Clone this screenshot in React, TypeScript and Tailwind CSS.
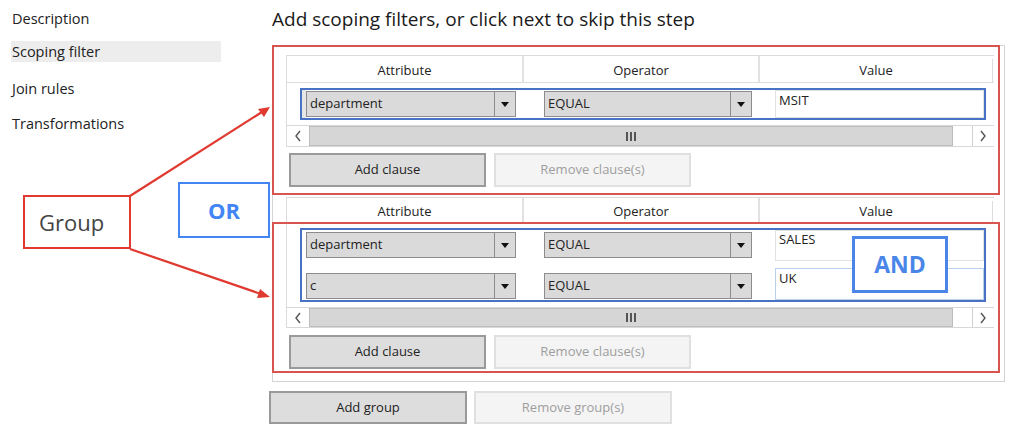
import React from "react";

const Arrow = () => (
  <svg width="8" height="5" viewBox="0 0 8 5">
    <path d="M0 0 L8 0 L4 5 Z" fill="#111" />
  </svg>
);

const Drop = ({ label, wide }: { label: string; wide: boolean }) => (
  <div
    className={`flex h-[26px] border border-[#8c8c8c] bg-[#dadada] ${wide ? "w-[210px]" : "w-[208px]"}`}
  >
    <div className="flex-1 flex items-center pl-[3px] text-[13px] text-[#222]">{label}</div>
    <div className="w-[21px] border-l border-[#8c8c8c] flex items-center justify-center">
      <Arrow />
    </div>
  </div>
);

const Chevron = ({ dir }: { dir: "l" | "r" }) => (
  <svg width="8" height="12" viewBox="0 0 8 12">
    <path
      d={dir === "l" ? "M6 1 L2 6 L6 11" : "M2 1 L6 6 L2 11"}
      fill="none"
      stroke="#555"
      strokeWidth="1.4"
    />
  </svg>
);

const ScrollBar = ({ h }: { h: string }) => (
  <div className={`flex ${h} border-t border-b border-[#d8d8d8] bg-white`}>
    <div className="w-[22px] flex items-center justify-center bg-white">
      <Chevron dir="l" />
    </div>
    <div className="w-[644px] bg-[#d6d6d6] border border-[#bdbdbd] flex items-center justify-center gap-[2px]">
      <div className="w-[2px] h-[9px] bg-[#555]" />
      <div className="w-[2px] h-[9px] bg-[#555]" />
      <div className="w-[2px] h-[9px] bg-[#555]" />
    </div>
    <div className="w-[19px] bg-white" />
    <div className="w-[21px] border-l border-[#d0d0d0] flex items-center justify-center bg-white">
      <Chevron dir="r" />
    </div>
  </div>
);

const Header = ({ h }: { h: string }) => (
  <div className={`flex ${h} border-t border-b border-[#dcdcdc] text-[13px] text-[#222] pt-[3px]`}>
    <div className="w-[235px] flex items-center justify-center">Attribute</div>
    <div className="w-[2px] bg-[#e2e2e2] -mt-[3px]" />
    <div className="w-[234px] flex items-center justify-center">Operator</div>
    <div className="w-[2px] bg-[#e2e2e2] -mt-[3px]" />
    <div className="w-[233px] flex items-center justify-center border-r border-[#dcdcdc]">Value</div>
  </div>
);

const Buttons = ({ add, remove, mt }: { add: string; remove: string; mt: string }) => (
  <div className={`flex gap-[8px] ml-[3px] ${mt} text-[13px]`}>
    <div className="w-[197px] h-[34px] border-2 border-[#9a9a9a] bg-[#dddddd] flex items-center justify-center text-[#222]">
      {add}
    </div>
    <div className="w-[197px] h-[34px] border-2 border-[#e0e0e0] bg-[#f4f4f4] flex items-center justify-center text-[#9e9e9e]">
      {remove}
    </div>
  </div>
);

export default function App() {
  return (
    <div className="relative w-[1024px] h-[431px] bg-white overflow-hidden flex font-['Open_Sans',sans-serif] text-[#222]">
      {/* Left nav */}
      <div className="w-[269px] shrink-0 pl-[11px] pt-[8px] text-[14.5px]">
        <div className="w-[210px] h-[21px] flex items-center pl-[1px]">Description</div>
        <div className="w-[210px] h-[21px] flex items-center pl-[1px] mt-[12px] bg-[#ededed]">Scoping filter</div>
        <div className="w-[210px] h-[21px] flex items-center pl-[1px] mt-[16px]">Join rules</div>
        <div className="w-[210px] h-[21px] flex items-center pl-[1px] mt-[14px]">Transformations</div>
      </div>

      {/* Main */}
      <div className="flex flex-col">
        <div className="ml-[3px] mt-[7px] h-[24px] flex items-center text-[19px] text-[#1a1a1a]">
          Add scoping filters, or click next to skip this step
        </div>

        <div className="ml-[3px] mt-[14px] w-[733px] h-[337px] border border-[#d4d4d4] flex flex-col">
          {/* Group 1 */}
          <div className="-ml-px -mt-px w-[728px] h-[150px] border-2 border-[#d9534f] pl-[12px] pt-[8px]">
            <div className="w-[708px] border-l border-[#dcdcdc]">
              <Header h="h-[28px]" />
              <div className="h-[42px] pt-[5px] pl-[13px]">
                <div className="w-[686px] h-[32px] border-2 border-[#4a72c4] flex">
                  <div className="w-[4px] h-[28px] bg-[#e6e6e6]" />
                  <div className="pt-[1px]">
                    <Drop label="department" wide={true} />
                  </div>
                  <div className="w-[28px]" />
                  <div className="pt-[1px]">
                    <Drop label="EQUAL" wide={false} />
                  </div>
                  <div className="w-[23px]" />
                  <div className="w-[209px] h-[28px] border border-[#e2e2e2] pl-[3px] text-[13px] leading-[16px] pt-[1px]">
                    MSIT
                  </div>
                </div>
              </div>
              <ScrollBar h="h-[22px]" />
            </div>
            <Buttons add="Add clause" remove="Remove clause(s)" mt="mt-[6px]" />
          </div>

          {/* Group 2 header */}
          <div className="ml-[13px] mt-[2px] w-[708px] border-l border-[#dcdcdc]">
            <Header h="h-[26px]" />
          </div>

          {/* Group 2 */}
          <div className="-ml-px -mt-px w-[728px] h-[151px] border-2 border-[#d9534f] pl-[12px]">
            <div className="w-[708px] border-l border-[#dcdcdc]">
              <div className="h-[83px] pt-[4px] pl-[13px]">
                <div className="w-[686px] h-[74px] border-2 border-[#4a72c4] flex flex-col">
                  <div className="h-[37px] flex items-start">
                    <div className="w-[4px]" />
                    <div className="mt-[2px]">
                      <Drop label="department" wide={true} />
                    </div>
                    <div className="w-[28px]" />
                    <div className="mt-[2px]">
                      <Drop label="EQUAL" wide={false} />
                    </div>
                    <div className="w-[23px]" />
                    <div className="w-[209px] h-[31px] border border-[#e2e2e2] pl-[3px] text-[13px] leading-[16px]">
                      SALES
                    </div>
                  </div>
                  <div className="h-[33px] flex items-start">
                    <div className="w-[4px]" />
                    <div className="mt-[6px]">
                      <Drop label="c" wide={true} />
                    </div>
                    <div className="w-[28px]" />
                    <div className="mt-[6px]">
                      <Drop label="EQUAL" wide={false} />
                    </div>
                    <div className="w-[23px]" />
                    <div className="w-[209px] h-[32px] mt-[1px] border border-[#b9cfee] pl-[3px] text-[13px] leading-[18px]">
                      UK
                    </div>
                  </div>
                </div>
              </div>
              <ScrollBar h="h-[21px]" />
            </div>
            <Buttons add="Add clause" remove="Remove clause(s)" mt="mt-[7px]" />
          </div>
        </div>

        <div className="flex gap-[7px] mt-[9px] text-[13px]">
          <div className="w-[198px] h-[33px] border-2 border-[#9a9a9a] bg-[#dddddd] flex items-center justify-center text-[#222]">
            Add group
          </div>
          <div className="w-[198px] h-[33px] border-2 border-[#e0e0e0] bg-[#f4f4f4] flex items-center justify-center text-[#9e9e9e]">
            Remove group(s)
          </div>
        </div>
      </div>

      {/* Annotations */}
      <svg className="absolute left-0 top-0 pointer-events-none" width="1024" height="431">
        <line x1="130" y1="196" x2="262" y2="112" stroke="#e0392f" strokeWidth="2.2" />
        <path d="M270 107 L258 109 L264 117 Z" fill="#e0392f" />
        <line x1="130" y1="249" x2="261" y2="294" stroke="#e0392f" strokeWidth="2.2" />
        <path d="M270 297 L260 289 L257 298 Z" fill="#e0392f" />
      </svg>
      <div className="absolute left-[23px] top-[195px] w-[108px] h-[54px] border-2 border-[#e0392f] bg-white flex items-center pl-[14px] text-[22px] text-[#444]">
        Group
      </div>
      <div className="absolute left-[178px] top-[182px] w-[92px] h-[56px] border-2 border-[#4285f4] bg-white flex items-center justify-center text-[22px] font-bold text-[#4285f4]">
        OR
      </div>
      <div className="absolute left-[852px] top-[236px] w-[96px] h-[57px] border-[3px] border-[#4a86e8] bg-white flex items-center justify-center text-[23px] font-bold text-[#4a86e8]">
        AND
      </div>
    </div>
  );
}
